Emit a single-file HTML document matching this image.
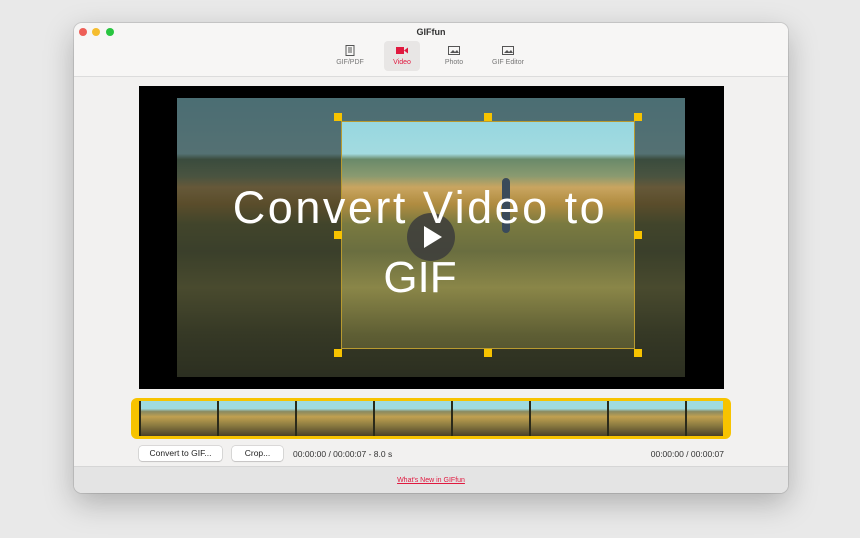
<!DOCTYPE html>
<html><head><style>
*{margin:0;padding:0;box-sizing:border-box}
body{width:860px;height:538px;background:#e9e9e9;font-family:"Liberation Sans",sans-serif;position:relative;overflow:hidden}
.win{position:absolute;left:74px;top:23px;width:714px;height:470px;background:#f2f1f0;border-radius:8px;box-shadow:0 10px 30px rgba(0,0,0,.25),0 0 0 1px rgba(0,0,0,.1);overflow:hidden}
.tb{position:absolute;left:0;top:0;width:714px;height:54px;background:#f7f6f5;border-bottom:1px solid #dcdcdc}
.dot{position:absolute;top:5px;width:8px;height:8px;border-radius:50%}
.title{position:absolute;top:4px;left:0;width:714px;text-align:center;font-size:9px;font-weight:bold;color:#333}
.tab{position:absolute;top:18px;height:30px;text-align:center;font-size:7px;color:#777;padding-top:4px}
.tab svg{display:block;margin:0 auto 3px}
.abs{position:absolute}
.scene{position:absolute;left:177px;top:98px;width:508px;height:279px;overflow:hidden;
background:linear-gradient(180deg,#8ed4e0 0%,#a3dbe0 20%,#6a8a6a 22%,#8a9a70 28%,#c9a560 32%,#b08c40 38%,#7a7a40 45%,#6a6e40 55%,#8a8648 68%,#5e5e34 85%,#4a4a2a 100%)}
.dim{position:absolute;background:rgba(20,25,25,.55)}
.h{position:absolute;width:8px;height:8px;background:#f7c300}
.btn{position:absolute;top:446px;height:15px;background:#fff;border-radius:3px;box-shadow:0 0 0 .5px rgba(0,0,0,.2),0 1px 1px rgba(0,0,0,.1);font-size:8.5px;color:#222;text-align:center;line-height:15px}
.t{position:absolute;top:449px;font-size:8.5px;color:#333}
</style></head><body>
<div class="win">
 <div class="tb">
  <div class="dot" style="left:5px;background:#ee5f57"></div>
  <div class="dot" style="left:18px;background:#f5bd2f"></div>
  <div class="dot" style="left:32px;background:#29c540"></div>
  <div class="title">GIFfun</div>
  <div class="tab" style="left:256px;width:40px"><svg width="10" height="11"><rect x="1" y=".5" width="8" height="10" fill="none" stroke="#555"/><path d="M3 3h4M3 5h4M3 7h4" stroke="#555"/></svg>GIF/PDF</div>
  <div class="tab" style="left:310px;width:36px;background:#e8e6e5;border-radius:4px;color:#e0193f"><svg width="12" height="11"><rect x="0" y="2" width="8" height="7" fill="#e0193f"/><path d="M8 5.5l4-3v6z" fill="#e0193f"/></svg>Video</div>
  <div class="tab" style="left:362px;width:36px"><svg width="12" height="11"><rect x=".5" y="1.5" width="11" height="8" fill="none" stroke="#555"/><path d="M2 8l3-3 2 2 2-2 2 3z" fill="#555"/></svg>Photo</div>
  <div class="tab" style="left:412px;width:44px"><svg width="12" height="11"><rect x=".5" y="1.5" width="11" height="8" fill="none" stroke="#555"/><path d="M2 8l3-3 2 2 2-2 2 3z" fill="#555"/></svg>GIF Editor</div>
 </div>
 <div style="position:absolute;left:0;top:443px;width:714px;height:27px;background:#e4e4e4;border-top:1px solid #d6d6d6;text-align:center;font-size:7px;color:#e0193f;text-decoration:underline;line-height:27px">What's New in GIFfun</div>
</div>
<div class="abs" style="left:139px;top:86px;width:585px;height:303px;background:#000"></div>
<div class="scene">
 <div class="abs" style="left:325px;top:80px;width:8px;height:55px;background:#3a4a5a;border-radius:4px"></div>
</div>
<div class="dim" style="left:177px;top:98px;width:508px;height:23px"></div>
<div class="dim" style="left:177px;top:349px;width:508px;height:28px"></div>
<div class="dim" style="left:177px;top:121px;width:164px;height:228px"></div>
<div class="dim" style="left:635px;top:121px;width:50px;height:228px"></div>
<div class="abs" style="left:341px;top:121px;width:294px;height:228px;border:1px solid #b89a30"></div>
<div class="h" style="left:334px;top:113px"></div><div class="h" style="left:484px;top:113px"></div><div class="h" style="left:634px;top:113px"></div>
<div class="h" style="left:334px;top:231px"></div><div class="h" style="left:634px;top:231px"></div>
<div class="h" style="left:334px;top:349px"></div><div class="h" style="left:484px;top:349px"></div><div class="h" style="left:634px;top:349px"></div>
<div class="abs" style="left:407px;top:213px;width:48px;height:48px;border-radius:50%;background:rgba(60,60,60,.85)"></div>
<svg class="abs" style="left:422px;top:225px" width="22" height="24"><path d="M2 1l18 11-18 11z" fill="#fff"/></svg>
<div class="abs" style="left:140px;top:180px;width:560px;text-align:center;color:#fff;font-size:45px;letter-spacing:2.5px;line-height:56px">Convert Video to</div>
<div class="abs" style="left:340px;top:250px;width:160px;text-align:center;color:#fff;font-size:44px;line-height:56px">GIF</div>
<div class="abs" style="left:131px;top:398px;width:600px;height:41px;background:#f7c300;border-radius:6px"></div>
<div class="abs" style="left:139px;top:401px;width:584px;height:35px;background:repeating-linear-gradient(90deg,#2a2a1a 0,#2a2a1a 2px,transparent 2px,transparent 78px),linear-gradient(180deg,#9fdbe0 0%,#9fdbe0 22%,#8a8a60 30%,#c0a050 45%,#8a7a40 70%,#4a4028 100%)"></div>
<div class="btn" style="left:139px;width:83px">Convert to GIF...</div>
<div class="btn" style="left:232px;width:51px">Crop...</div>
<div class="t" style="left:293px">00:00:00 / 00:00:07 - 8.0 s</div>
<div class="t" style="left:642px;width:82px;text-align:right">00:00:00 / 00:00:07</div>
</body></html>
